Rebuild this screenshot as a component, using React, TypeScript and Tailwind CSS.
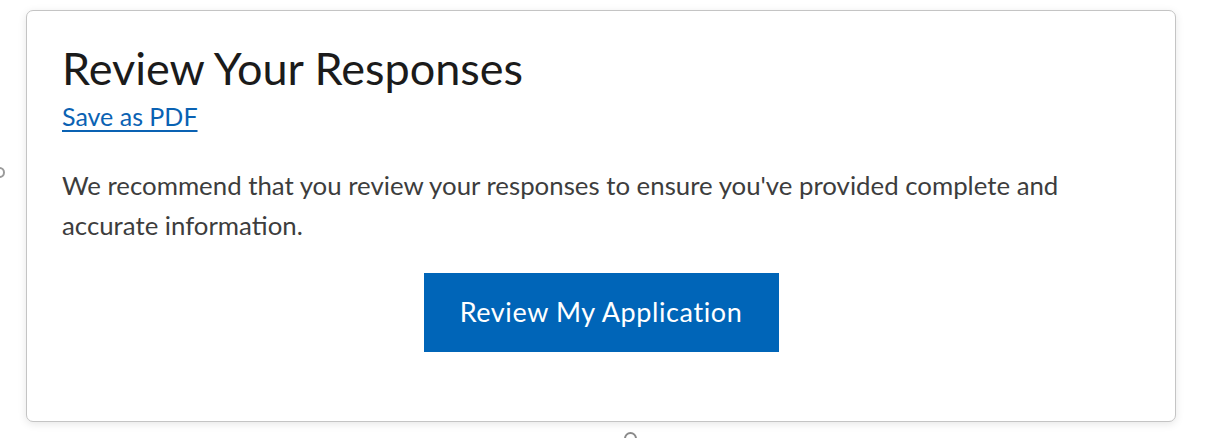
import React from 'react';

const App: React.FC = () => {
  return (
    <div className="relative w-[1229px] h-[438px] overflow-hidden bg-white font-['Lato','Liberation_Sans',sans-serif]">
      {/* cut-off bits of the page around the card */}
      <span className="absolute left-[-6px] top-[167px] w-[11px] h-[11px] rounded-full border-2 border-[#9a9a9a]" />
      <span className="absolute left-[624px] top-[432px] w-[13px] h-[13px] rounded-full border-2 border-[#8a8a8a]" />

      <div className="ml-[26px] mt-[10px] w-[1150px] h-[412px] rounded-[7px] border border-[#c4c4c4] bg-white shadow-[0_2px_8px_rgba(0,0,0,0.10)] px-[35px] pt-[33px]">
        <h1 className="text-[45px] leading-[1.1] text-[#1b1b1b] font-normal">Review Your Responses</h1>
        <a href="#" className="inline-block mt-[6px] text-[25px] leading-[1.3] text-[#0a62b3] underline underline-offset-[4px]">
          Save as PDF
        </a>
        <p className="mt-[33px] text-[25.8px] leading-[40px] text-[#3d3d3d] max-w-[1050px]">
          We recommend that you review your responses to ensure you've provided complete and accurate information.
        </p>
        <div className="flex justify-center mt-[28px]">
          <button className="w-[355px] h-[79px] bg-[#0065b8] text-white text-[27px] tracking-[0.6px]">
            Review My Application
          </button>
        </div>
      </div>
    </div>
  );
};

export default App;
